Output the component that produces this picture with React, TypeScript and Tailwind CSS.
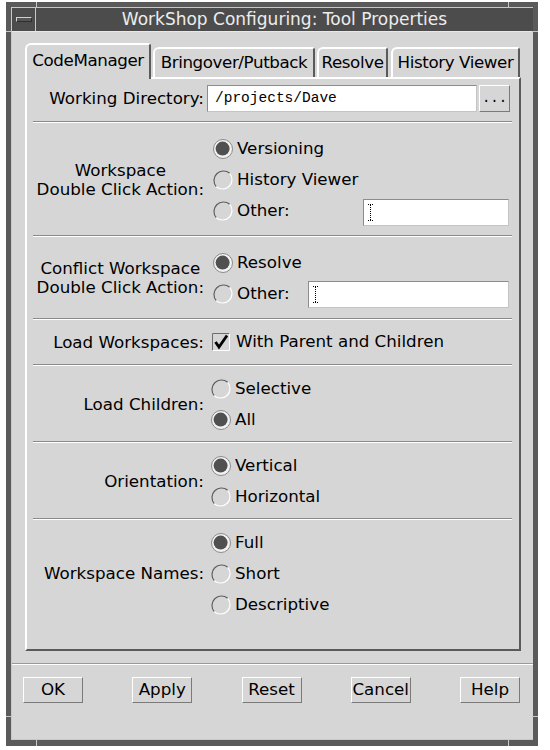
import React from 'react';

const Radio = ({ checked }: { checked?: boolean }) => (
  <svg width="20" height="20" viewBox="0 0 20 20" className="shrink-0">
    {checked ? (
      <>
        <circle cx="10" cy="10" r="9.5" fill="#f2f2f2" stroke="#8a8a8a" strokeWidth="1" />
        <circle cx="9.6" cy="9.6" r="7" fill="#505050" />
      </>
    ) : (
      <>
        <path d="M3.3 16.7 A9.5 9.5 0 0 1 16.7 3.3" fill="none" stroke="#5e5e5e" strokeWidth="1.2" />
        <path d="M16.7 3.3 A9.5 9.5 0 0 1 3.3 16.7" fill="none" stroke="#ffffff" strokeWidth="1.2" />
      </>
    )}
  </svg>
);

const CheckBox = () => (
  <svg width="18" height="18" viewBox="0 0 18 18" className="shrink-0">
    <path d="M0.5 17.5V0.5H17.5" fill="none" stroke="#6e6e6e" strokeWidth="1" />
    <path d="M17.5 0.5V17.5H0.5" fill="none" stroke="#ffffff" strokeWidth="1" />
    <path d="M3.5 9l3.5 5L15 2.5" fill="none" stroke="#000" strokeWidth="2.8" strokeLinejoin="miter" />
  </svg>
);

const Caret = () => (
  <svg width="5" height="17" viewBox="0 0 5 17" className="ml-[4px] shrink-0">
    <path d="M0 0.5h5M2.5 1v15M0 16.5h5" fill="none" stroke="#000" strokeWidth="1" strokeDasharray="1 1" />
  </svg>
);

const Sep = () => <div className="ml-[6px] mr-[7px] h-[2px] border-t border-b border-t-[#8a8a8a] border-b-white" />;

interface OptionProps {
  checked?: boolean;
  label: string;
  pl?: string;
}

const Option = ({ checked, label, pl = 'pl-[9px]' }: OptionProps) => (
  <div className={`h-[31px] flex items-center gap-[4px] ${pl}`}>
    <Radio checked={checked} />
    <span>{label}</span>
  </div>
);

const Field = ({ width }: { width: string }) => (
  <div className={`${width} h-[27px] flex items-center bg-white border border-t-[#8c8c8c] border-l-[#8c8c8c] border-r-[#c4c4c4] border-b-[#c4c4c4]`}>
    <Caret />
  </div>
);

const Section = ({ label, className, children }: { label: React.ReactNode; className: string; children: React.ReactNode }) => (
  <div className={`flex ${className}`}>
    <div className="w-[177px] shrink-0 flex items-center justify-end">
      <div className="text-center leading-[19px] whitespace-nowrap">{label}</div>
    </div>
    <div className="flex flex-col">{children}</div>
  </div>
);

const tabs = [
  { name: 'CodeManager', w: 'w-[126px]', active: true },
  { name: 'Bringover/Putback', w: 'w-[162px] ml-[2px]' },
  { name: 'Resolve', w: 'w-[71px] ml-[2px]' },
  { name: 'History Viewer', w: 'w-[129px] ml-[3px]' },
];

const buttons = ['OK', 'Apply', 'Reset', 'Cancel', 'Help'];

export default function App() {
  return (
    <div className="w-[550px] h-[750px] bg-white pt-[2px] pl-[6px] font-['DejaVu_Sans',sans-serif] text-[16.7px] text-black">
      <div className="relative w-[532px] h-[744px] bg-[#5a5a5a] p-[5px] pb-[6px]">
        {/* resize handle ticks */}
        <div className="absolute left-[30px] top-0 w-px h-[6px] bg-[#c8c8c8]" />
        <div className="absolute left-[502px] top-0 w-px h-[6px] bg-[#c8c8c8]" />
        <div className="absolute left-0 top-[29px] w-[6px] h-px bg-[#c8c8c8]" />
        <div className="absolute left-[526px] top-[29px] w-[6px] h-px bg-[#c8c8c8]" />
        <div className="absolute left-0 top-[714px] w-[6px] h-px bg-[#c8c8c8]" />
        <div className="absolute left-[526px] top-[714px] w-[6px] h-px bg-[#c8c8c8]" />
        <div className="absolute left-[30px] bottom-0 w-px h-[6px] bg-[#c8c8c8]" />
        <div className="absolute left-[502px] bottom-0 w-px h-[6px] bg-[#c8c8c8]" />

        <div className="h-full flex flex-col border-t border-l border-b border-[#c8c8c8]">
          <div className="h-[23px] flex bg-[#4c4c4c] shrink-0">
            <div className="w-[24px] border-r border-[#c8c8c8] flex items-center justify-center">
              <div className="w-[16px] h-[5px] bg-[#555] border border-t-[#d0d0d0] border-l-[#d0d0d0] border-r-[#2e2e2e] border-b-[#2e2e2e]" />
            </div>
            <div className="flex-1 flex items-center justify-center text-[#ececec] text-[17px] whitespace-nowrap">
              WorkShop Configuring: Tool Properties
            </div>
          </div>

          <div className="flex-1 flex flex-col bg-[#d6d6d6] border-t border-[#e8e8e8] pt-[11px]">
            <div className="px-[13px] pr-[12px]">
              <div className="flex items-end h-[34px]">
                {tabs.map((t) =>
                  t.active ? (
                    <div
                      key={t.name}
                      className={`${t.w} relative z-10 h-[36px] mb-[-2px] bg-[#d6d6d6] border-l-2 border-t-2 border-r-2 border-l-white border-t-white border-r-[#5a5a5a] rounded-tl-[6px] rounded-tr-[3px] flex items-center justify-center pb-[2px] whitespace-nowrap tracking-[-0.4px]`}
                    >
                      {t.name}
                    </div>
                  ) : (
                    <div
                      key={t.name}
                      className={`${t.w} h-[30px] bg-[#d6d6d6] border-l-2 border-t-2 border-r-2 border-l-white border-t-white border-r-[#5a5a5a] rounded-tl-[6px] rounded-tr-[3px] flex items-center justify-center whitespace-nowrap tracking-[-0.4px]`}
                    >
                      {t.name}
                    </div>
                  )
                )}
              </div>

              <div className="h-[574px] flex flex-col border-2 border-l-white border-t-white border-r-[#5a5a5a] border-b-[#5a5a5a]">
                <div className="flex items-center pt-[6px] pb-[9px]">
                  <div className="w-[177px] shrink-0 text-right whitespace-nowrap">Working Directory:</div>
                  <div className="ml-[3px] w-[270px] h-[27px] flex items-center bg-white border border-t-[#8c8c8c] border-l-[#8c8c8c] border-r-[#c4c4c4] border-b-[#c4c4c4] pl-[7px] font-['Liberation_Mono',monospace] text-[14.5px]">
                    /projects/Dave
                  </div>
                  <button className="ml-[2px] w-[31px] h-[27px] flex items-center justify-center border border-t-white border-l-white border-r-[#7a7a7a] border-b-[#7a7a7a] font-['Liberation_Mono',monospace] text-[14px]">
                    ...
                  </button>
                </div>
                <Sep />

                <Section
                  className="pt-[10px] pb-[9px]"
                  label={
                    <>
                      Workspace
                      <br />
                      Double Click Action:
                    </>
                  }
                >
                  <Option checked label="Versioning" />
                  <Option label="History Viewer" />
                  <div className="h-[31px] flex items-center gap-[4px] pl-[9px]">
                    <Radio />
                    <span className="w-[122px]">Other:</span>
                    <div className="mt-[4px]">
                      <Field width="w-[146px]" />
                    </div>
                  </div>
                </Section>
                <Sep />

                <Section
                  className="pt-[10px] pb-[9px]"
                  label={
                    <>
                      Conflict Workspace
                      <br />
                      Double Click Action:
                    </>
                  }
                >
                  <Option checked label="Resolve" />
                  <div className="h-[31px] flex items-center gap-[4px] pl-[9px]">
                    <Radio />
                    <span className="w-[67px]">Other:</span>
                    <div className="mt-[2px]">
                      <Field width="w-[201px]" />
                    </div>
                  </div>
                </Section>
                <Sep />

                <Section className="h-[44px]" label="Load Workspaces:">
                  <div className="h-[44px] flex items-center gap-[6px] pl-[8px]">
                    <CheckBox />
                    <span>With Parent and Children</span>
                  </div>
                </Section>
                <Sep />

                <Section className="pt-[7px] pb-[6px]" label="Load Children:">
                  <Option label="Selective" pl="pl-[7px]" />
                  <Option checked label="All" pl="pl-[7px]" />
                </Section>
                <Sep />

                <Section className="pt-[7px] pb-[6px]" label="Orientation:">
                  <Option checked label="Vertical" pl="pl-[7px]" />
                  <Option label="Horizontal" pl="pl-[7px]" />
                </Section>
                <Sep />

                <Section className="pt-[7px]" label="Workspace Names:">
                  <Option checked label="Full" pl="pl-[7px]" />
                  <Option label="Short" pl="pl-[7px]" />
                  <Option label="Descriptive" pl="pl-[7px]" />
                </Section>
              </div>
            </div>

            <div className="mt-[12px] h-[2px] border-t border-b border-t-[#9a9a9a] border-b-white" />

            <div className="mt-[12px] flex justify-between pl-[11px] pr-[13px]">
              {buttons.map((b) => (
                <button
                  key={b}
                  className="w-[60px] h-[26px] flex items-center justify-center border border-t-white border-l-white border-r-[#7a7a7a] border-b-[#7a7a7a]"
                >
                  {b}
                </button>
              ))}
            </div>
          </div>
        </div>
      </div>
    </div>
  );
}
